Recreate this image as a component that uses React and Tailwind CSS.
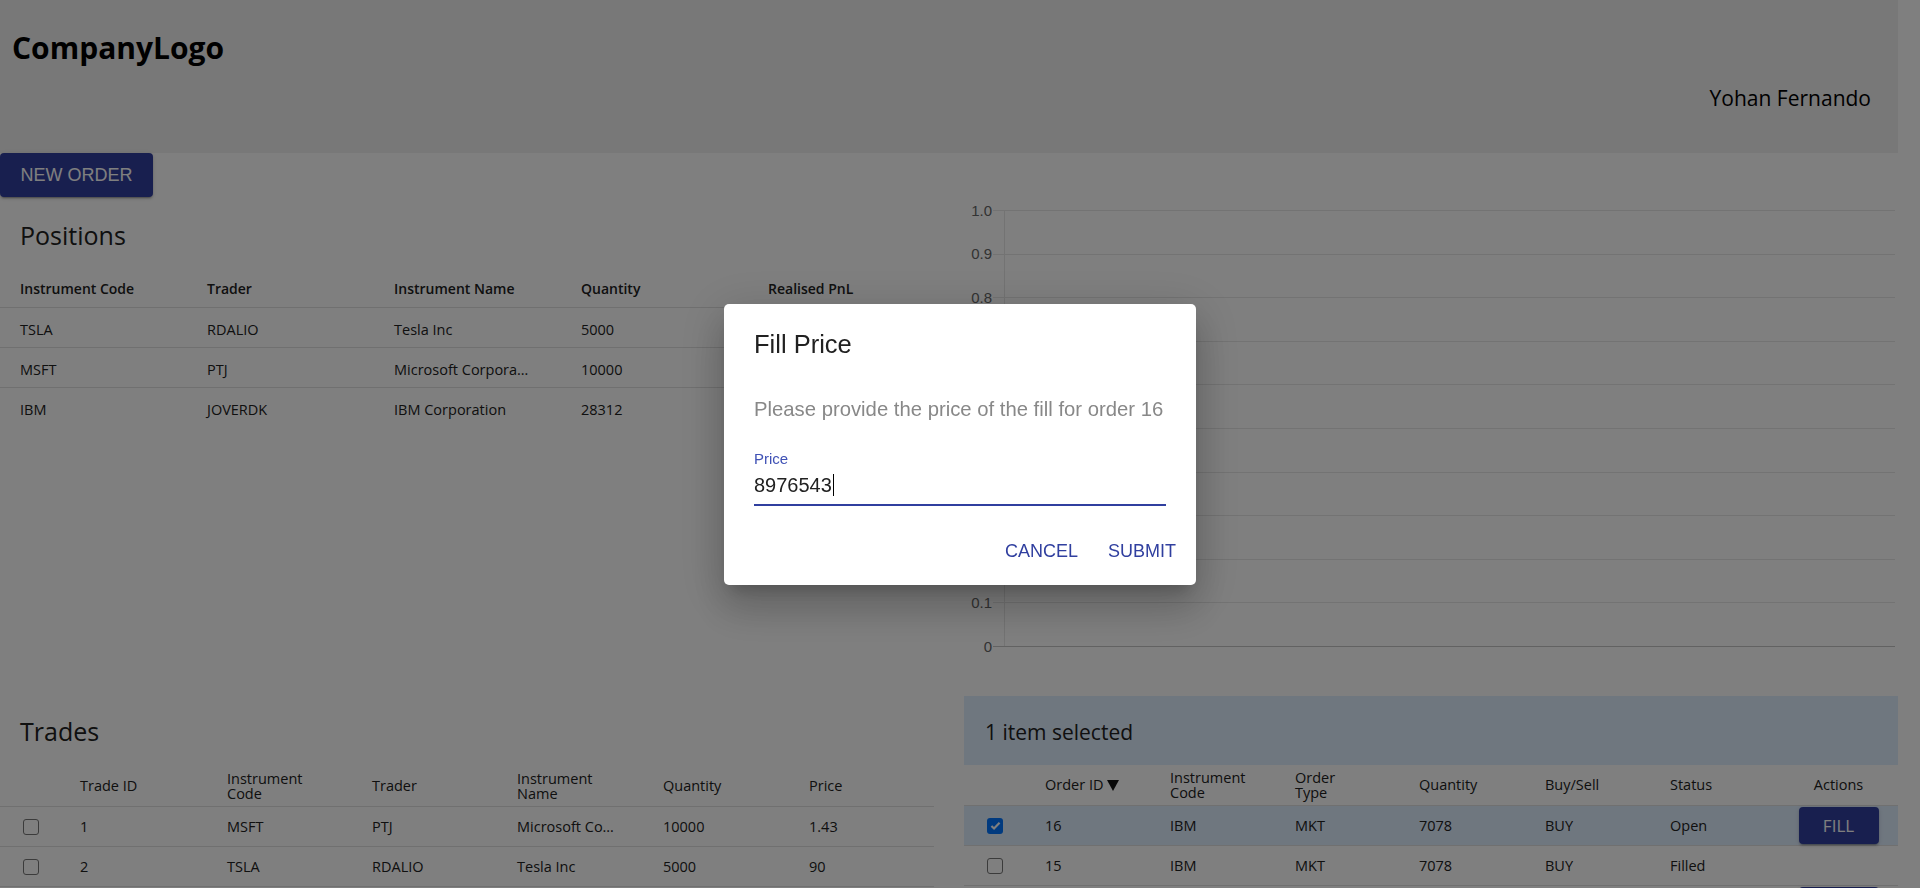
import React from "react";

const positions = [
  { code: "TSLA", trader: "RDALIO", name: "Tesla Inc", qty: 5000 },
  { code: "MSFT", trader: "PTJ", name: "Microsoft Corpora…", qty: 10000 },
  { code: "IBM", trader: "JOVERDK", name: "IBM Corporation", qty: 28312 },
];

const trades = [
  { id: 1, code: "MSFT", trader: "PTJ", name: "Microsoft Co…", qty: 10000, price: "1.43" },
  { id: 2, code: "TSLA", trader: "RDALIO", name: "Tesla Inc", qty: 5000, price: "90" },
  { id: 3, code: "IBM", trader: "JOVERDK", name: "IBM Corporation", qty: 28312, price: "120" },
];

const orders = [
  { id: 16, code: "IBM", type: "MKT", qty: 7078, side: "BUY", status: "Open", selected: true },
  { id: 15, code: "IBM", type: "MKT", qty: 7078, side: "BUY", status: "Filled" },
  { id: 14, code: "TSLA", type: "MKT", qty: 500, side: "SELL", status: "Open" },
];

const ticks = [1, 0.9, 0.8, 0.7, 0.6, 0.5, 0.4, 0.3, 0.2, 0.1, 0];

function Checkbox({ checked }) {
  if (checked) {
    return (
      <span className="flex h-4 w-4 items-center justify-center rounded-[3px] bg-[#0075ff]">
        <svg viewBox="0 0 16 16" className="h-[13px] w-[13px]">
          <path d="M3 8.5l3.2 3.2L13 4.5" stroke="white" strokeWidth="2.6" fill="none" />
        </svg>
      </span>
    );
  }
  return <span className="block h-4 w-4 rounded-[3px] border border-[#767676] bg-white" />;
}

function TwoLine({ a, b }) {
  return (
    <div className="leading-[15px]">
      <div>{a}</div>
      <div>{b}</div>
    </div>
  );
}

function Chart() {
  const y = (v) => 13 + (1 - v) * 436;
  return (
    <svg width="934" height="499" className="block font-['Liberation_Sans',Arial,sans-serif]">
      <line x1="40.5" y1="13" x2="40.5" y2="449" stroke="#e6e6e6" />
      {ticks.map((v) => (
        <g key={v}>
          <line
            x1="29"
            x2="931"
            y1={Math.round(y(v)) + 0.5}
            y2={Math.round(y(v)) + 0.5}
            stroke={v === 0 ? "#c4c4c4" : "#e6e6e6"}
          />
          <text x="28" y={y(v)} textAnchor="end" dominantBaseline="central" fontSize="15" fill="#666">
            {v === 0 ? "0" : v.toFixed(1)}
          </text>
        </g>
      ))}
    </svg>
  );
}

function Positions() {
  const cols = ["Instrument Code", "Trader", "Instrument Name", "Quantity", "Realised PnL"];
  return (
    <section>
      <h2 className="h-[71px] pl-[20px] pt-[5px] text-[25px] font-normal leading-[66px]">Positions</h2>
      <div className="flex h-[40px] items-center border-b border-[#e0e0e0] pt-[2px] text-[14px] font-semibold">
        {cols.map((c, i) => (
          <div key={c} className={i === 4 ? "flex-1 pl-[20px]" : "w-[187px] pl-[20px]"}>
            {c}
          </div>
        ))}
      </div>
      {positions.map((p, i) => (
        <div
          key={p.code}
          className={`flex h-[40px] items-center pt-[4px] text-[14.5px] ${i < positions.length - 1 ? "border-b border-[#e0e0e0]" : ""}`}
        >
          <div className="w-[187px] pl-[20px]">{p.code}</div>
          <div className="w-[187px] pl-[20px]">{p.trader}</div>
          <div className="w-[187px] truncate pl-[20px]">{p.name}</div>
          <div className="w-[187px] pl-[20px]">{p.qty}</div>
          <div className="flex-1 pl-[20px]"></div>
        </div>
      ))}
    </section>
  );
}

function Trades() {
  const w = ["w-[147px]", "w-[145px]", "w-[145px]", "w-[146px]", "w-[146px]", "flex-1"];
  return (
    <section>
      <h2 className="h-[69px] pl-[20px] pt-[2px] text-[25px] font-normal leading-[67px]">Trades</h2>
      <div className="flex h-[42px] items-center border-b border-[#e0e0e0] text-[14.5px]">
        <div className="w-[64px]" />
        <div className={`${w[0]} pl-[16px]`}>Trade ID</div>
        <div className={`${w[1]} pl-[16px]`}>
          <TwoLine a="Instrument" b="Code" />
        </div>
        <div className={`${w[2]} pl-[16px]`}>Trader</div>
        <div className={`${w[3]} pl-[16px]`}>
          <TwoLine a="Instrument" b="Name" />
        </div>
        <div className={`${w[4]} pl-[16px]`}>Quantity</div>
        <div className={`${w[5]} pl-[16px]`}>Price</div>
      </div>
      {trades.map((t) => (
        <div key={t.id} className="flex h-[40px] items-center border-b border-[#e0e0e0] text-[14.5px]">
          <div className="w-[64px] pl-[23px]">
            <Checkbox />
          </div>
          <div className={`${w[0]} pl-[16px]`}>{t.id}</div>
          <div className={`${w[1]} pl-[16px]`}>{t.code}</div>
          <div className={`${w[2]} pl-[16px]`}>{t.trader}</div>
          <div className={`${w[3]} truncate pl-[16px]`}>{t.name}</div>
          <div className={`${w[4]} pl-[16px]`}>{t.qty}</div>
          <div className={`${w[5]} pl-[16px]`}>{t.price}</div>
        </div>
      ))}
    </section>
  );
}

function Orders() {
  const w = ["w-[125px]", "w-[125px]", "w-[124px]", "w-[126px]", "w-[125px]", "w-[125px]"];
  return (
    <section>
      <div className="h-[69px] bg-[#dfeeff] pl-[21px] pt-[3px] text-[21px] leading-[66px]">1 item selected</div>
      <div className="flex h-[41px] items-center border-b border-[#e0e0e0] text-[14.5px]">
        <div className="w-[65px]" />
        <div className={`${w[0]} flex items-center pl-[16px]`}>
          Order ID
          <svg viewBox="0 0 14 14" className="ml-[3px] h-[14px] w-[14px]">
            <path d="M1 2h12L7 13z" fill="#111" />
          </svg>
        </div>
        <div className={`${w[1]} pl-[16px]`}>
          <TwoLine a="Instrument" b="Code" />
        </div>
        <div className={`${w[2]} pl-[16px]`}>
          <TwoLine a="Order" b="Type" />
        </div>
        <div className={`${w[3]} pl-[16px]`}>Quantity</div>
        <div className={`${w[4]} pl-[16px]`}>Buy/Sell</div>
        <div className={`${w[5]} pl-[16px]`}>Status</div>
        <div className="flex-1 text-center">Actions</div>
      </div>
      {orders.map((o) => (
        <div
          key={o.id}
          className={`flex h-[40px] items-center border-b border-[#e0e0e0] text-[14.5px] ${o.selected ? "bg-[#dfeeff]" : ""}`}
        >
          <div className="w-[65px] pl-[23px]">
            <Checkbox checked={o.selected} />
          </div>
          <div className={`${w[0]} pl-[16px]`}>{o.id}</div>
          <div className={`${w[1]} pl-[16px]`}>{o.code}</div>
          <div className={`${w[2]} pl-[16px]`}>{o.type}</div>
          <div className={`${w[3]} pl-[16px]`}>{o.qty}</div>
          <div className={`${w[4]} pl-[16px]`}>{o.side}</div>
          <div className={`${w[5]} pl-[16px]`}>{o.status}</div>
          <div className="flex flex-1 justify-center">
            {o.status === "Open" && (
              <button className="h-[37px] w-[80px] rounded-[4px] bg-[#303f9f] text-[17px] text-white shadow-[0_3px_1px_-2px_rgba(0,0,0,0.2),0_2px_2px_0_rgba(0,0,0,0.14),0_1px_5px_0_rgba(0,0,0,0.12)]">
                FILL
              </button>
            )}
          </div>
        </div>
      ))}
    </section>
  );
}

function FillDialog() {
  return (
    <div className="fixed inset-0 z-10 flex items-center justify-center bg-black/50">
      <div className="w-[472px] rounded-[5px] bg-white font-['Liberation_Sans',Arial,sans-serif] shadow-[0_11px_15px_-7px_rgba(0,0,0,0.2),0_24px_38px_3px_rgba(0,0,0,0.14),0_9px_46px_8px_rgba(0,0,0,0.12)]">
        <h2 className="px-[30px] pt-[20px] text-[25.5px] font-normal leading-[40px] text-[#212121]">Fill Price</h2>
        <p className="px-[30px] pt-[30px] text-[20.3px] leading-[30px] text-[#888]">
          Please provide the price of the fill for order 16
        </p>
        <div className="px-[30px] pt-[27px]">
          <div className="text-[15px] leading-[15px] text-[#3f51b5]">Price</div>
          <div className="mt-[7px] flex border-b-2 border-[#303f9f] pb-[7px] text-[20px] leading-[24px] text-[#212121]">
            <span>8976543</span>
            <span className="ml-px mt-[1px] h-[22px] w-px bg-black" />
          </div>
        </div>
        <div className="mt-[12px] flex justify-end gap-[10px] pb-[9px] pr-[10px] pt-[10px]">
          <button className="h-[48px] px-[10px] text-[18px] text-[#303f9f]">CANCEL</button>
          <button className="h-[48px] px-[10px] text-[18px] text-[#303f9f]">SUBMIT</button>
        </div>
      </div>
    </div>
  );
}

export default function App() {
  return (
    <div className="h-[888px] w-full overflow-hidden bg-white font-['Open_Sans',sans-serif] text-[#212121]">
      <div className="w-[1898px]">
        <header className="h-[153px] bg-[#f0f0f0] text-black">
          <div className="pl-[12px] pt-[33px] text-[30px] font-bold leading-[30px]">CompanyLogo</div>
          <div className="mt-[25px] pr-[27px] text-right text-[21px] leading-[21px]">Yohan Fernando</div>
        </header>
        <button className="flex h-[44px] w-[153px] items-center justify-center rounded-[4px] bg-[#303f9f] font-['Liberation_Sans',Arial,sans-serif] text-[18px] text-white shadow-[0_3px_1px_-2px_rgba(0,0,0,0.2),0_2px_2px_0_rgba(0,0,0,0.14),0_1px_5px_0_rgba(0,0,0,0.12)]">
          NEW ORDER
        </button>
        <div className="grid grid-cols-[934px_934px] gap-x-[30px]">
          <div className="h-[499px]">
            <Positions />
          </div>
          <div className="h-[499px]">
            <Chart />
          </div>
          <Trades />
          <Orders />
        </div>
      </div>
      <FillDialog />
    </div>
  );
}
